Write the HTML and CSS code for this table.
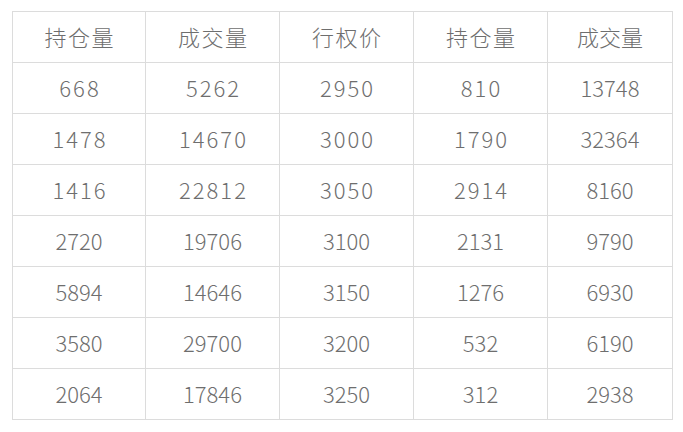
FILE: index.html
```html
<!DOCTYPE html>
<html lang="zh">
<head>
<meta charset="utf-8">
<link rel="stylesheet" href="styles.css">
</head>
<body>
<table class="grid">
  <colgroup>
    <col class="c1"><col class="c2"><col class="c3"><col class="c4"><col class="c5">
  </colgroup>
  <thead>
    <tr>
      <th class="sp1">持仓量</th><th class="sp1">成交量</th><th class="sp1">行权价</th><th class="sp1">持仓量</th><th>成交量</th>
    </tr>
  </thead>
  <tbody>
    <tr><td class="sp">668</td><td class="sp">5262</td><td class="sp">2950</td><td class="sp">810</td><td>13748</td></tr>
    <tr><td class="sp">1478</td><td class="sp">14670</td><td class="sp">3000</td><td class="sp">1790</td><td>32364</td></tr>
    <tr><td class="sp">1416</td><td class="sp">22812</td><td class="sp">3050</td><td class="sp">2914</td><td>8160</td></tr>
    <tr><td>2720</td><td>19706</td><td>3100</td><td>2131</td><td>9790</td></tr>
    <tr><td>5894</td><td>14646</td><td>3150</td><td>1276</td><td>6930</td></tr>
    <tr><td>3580</td><td>29700</td><td>3200</td><td>532</td><td>6190</td></tr>
    <tr><td>2064</td><td>17846</td><td>3250</td><td>312</td><td>2938</td></tr>
  </tbody>
</table>
</body>
</html>
```
FILE: styles.css
```css
html, body {
  margin: 0;
  padding: 0;
  background: #ffffff;
}
body {
  padding: 11px 0 0 12px;
  font-family: "Noto Sans CJK SC", "Noto Sans", sans-serif;
  color: #6e6e6e;
}
.grid {
  border-collapse: collapse;
  table-layout: fixed;
  width: 660px;
}
.c1 { width: 133px; }
.c2 { width: 134px; }
.c3 { width: 134px; }
.c4 { width: 134px; }
.c5 { width: 125px; }
.grid th,
.grid td {
  border: 1px solid #dcdcdc;
  height: 51px;
  padding: 0 0 3px 0;
  box-sizing: border-box;
  text-align: center;
  vertical-align: middle;
  font-size: 22px;
  font-weight: 300;
  line-height: 1;
  color: #6e6e6e;
}
.sp1 {
  letter-spacing: 1.5px;
  text-indent: 1.5px;
}
.sp {
  letter-spacing: 2px;
  text-indent: 2px;
}
```
